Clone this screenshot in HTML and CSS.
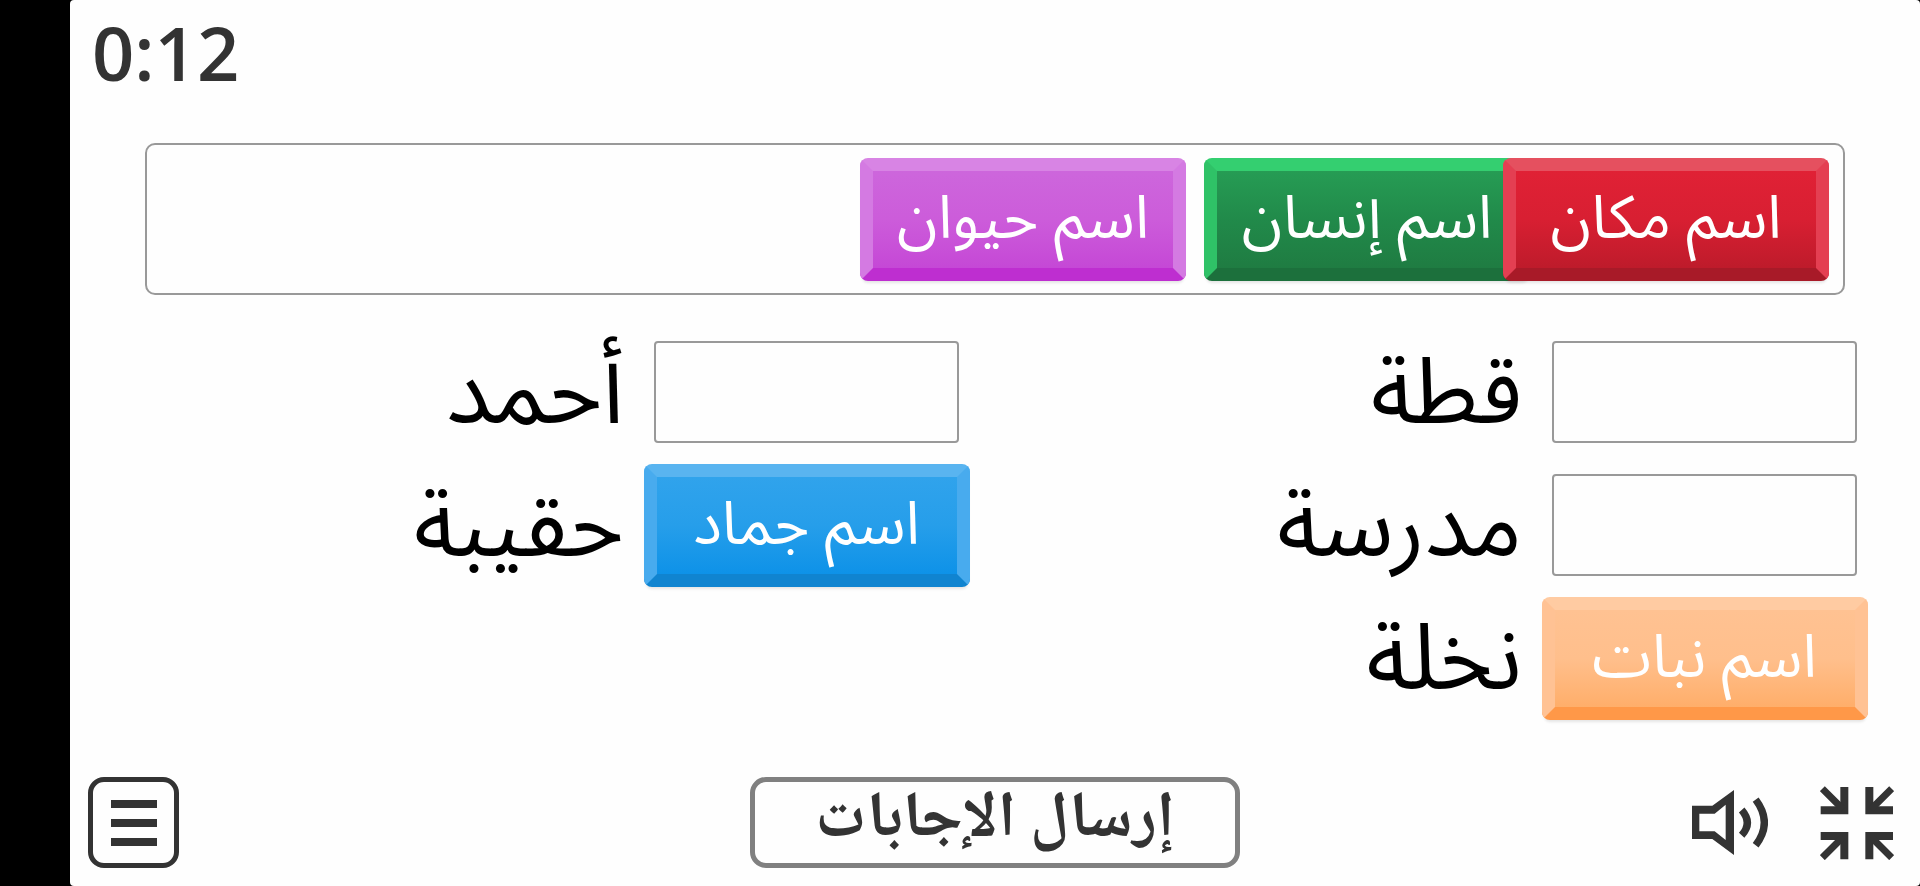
FILE: index.html
```html
<!DOCTYPE html>
<html lang="ar">
<head>
  <meta charset="UTF-8">
  <meta name="viewport" content="width=device-width, initial-scale=1.0">
  <title>اسم مكان</title>
  <link rel="stylesheet" href="styles.css">
</head>
<body>
  <main class="stage">
    <div class="timer">0:12</div>

    <div class="bank">
      <button class="tile purple" dir="rtl">اسم حيوان</button>
      <button class="tile green" dir="rtl">اسم إنسان</button>
      <button class="tile red" dir="rtl">اسم مكان</button>
    </div>

    <div class="questions">
      <div class="question">
        <span class="word" dir="rtl">أحمد</span>
        <div class="slot"></div>
      </div>
      <div class="question">
        <span class="word" dir="rtl">قطة</span>
        <div class="slot"></div>
      </div>
      <div class="question">
        <span class="word" dir="rtl">حقيبة</span>
        <div class="slot filled">
          <button class="tile blue" dir="rtl">اسم جماد</button>
        </div>
      </div>
      <div class="question">
        <span class="word" dir="rtl">مدرسة</span>
        <div class="slot"></div>
      </div>
      <div class="question last">
        <span class="word" dir="rtl">نخلة</span>
        <div class="slot filled">
          <button class="tile orange" dir="rtl">اسم نبات</button>
        </div>
      </div>
    </div>

    <footer class="toolbar">
      <div class="toolbar-left">
        <button class="menu-button" aria-label="القائمة">
          <svg width="46" height="46" viewBox="0 0 46 46" fill="#333">
            <path d="M0 0h46v8H0zM0 19h46v8H0zM0 38h46v8H0z"></path>
          </svg>
        </button>
      </div>
      <button class="submit-button" dir="rtl">إرسال الإجابات</button>
      <div class="toolbar-right">
        <button class="icon-button" aria-label="الصوت">
          <svg width="76" height="65" viewBox="92 88 228 195">
            <path fill="#333" fill-rule="evenodd" d="M92 135H153L218 88V283L153 235H92ZM114 159V212H160L193 238V132L160 159Z"></path>
            <path fill="none" stroke="#333" stroke-width="22" d="M241 148Q275 187 241 224M283 117Q335 186 283 254"></path>
          </svg>
        </button>
        <button class="icon-button" aria-label="إنهاء ملء الشاشة">
          <svg width="74" height="74" viewBox="480 74 222 222" fill="none" stroke="#333">
            <path stroke-width="24" d="M482 147H553V77M699 147H628V77M482 224H553V294M699 224H628V294"></path>
            <path stroke-width="21" d="M487 82L549 144M695 82L633 144M487 289L549 227M695 289L633 227"></path>
          </svg>
        </button>
      </div>
    </footer>
  </main>
</body>
</html>
```
FILE: styles.css
```css
* {
  box-sizing: border-box;
}

body {
  margin: 0;
  padding-left: 70px;
  background-color: #000;
  font-family: "Open Sans", "Noto Sans Arabic", "DejaVu Sans", sans-serif;
}

.stage {
  display: flex;
  flex-direction: column;
  min-height: 100vh;
  padding: 0 18px 18px;
  background-color: #fefefe;
  border-radius: 4px;
}

.timer {
  padding: 13px 0 0 4px;
  height: 143px;
  font-size: 74px;
  line-height: 80px;
  font-weight: 600;
  color: #333;
}

.bank {
  display: flex;
  justify-content: flex-end;
  align-items: center;
  height: 152px;
  margin: 0 57px;
  padding: 0 14px;
  border: 2px solid #999;
  border-radius: 10px;
}

button {
  padding: 0;
  border: none;
  background: transparent;
  font-family: inherit;
  cursor: pointer;
}

.tile {
  flex-shrink: 0;
  width: 326px;
  height: 123px;
  padding-bottom: 8px;
  border-style: solid;
  border-width: 13px;
  border-radius: 8px;
  background-clip: padding-box;
  color: #fff;
  font-size: 60px;
  line-height: 72px;
  white-space: nowrap;
  box-shadow: 0 4px 3px -2px rgba(0, 0, 0, 0.1);
}

.purple {
  margin-right: 18px;
  border-color: #d884e4 #d47ae2 #be2ed0 #d47ae2;
  background-color: #cd62dc;
  background-image: linear-gradient(#cd66dc, #cc5cda 50%, #c548d6);
}

.green {
  border-color: #34cf70 #2fc267 #1c703c #2fc267;
  background-color: #229050;
  background-image: linear-gradient(#269c54, #218a4a 50%, #1f7c42);
}

.red {
  margin-left: -27px;
  border-color: #e5505f #e43f52 #a81a28 #e43f52;
  background-color: #da1f32;
  background-image: linear-gradient(#e02135, #d81f32 50%, #be1b2b);
}

.blue {
  border-color: #59b4f0 #48abee #1084d0 #48abee;
  background-color: #1f9bea;
  background-image: linear-gradient(#30a3ec, #269eea 50%, #0e92e8);
}

.orange {
  border-color: #ffcba2 #ffc294 #ff9848 #ffc294;
  background-color: #ffbd8a;
  background-image: linear-gradient(#ffc292, #ffbf8c 50%, #ffae6a);
}

.questions {
  display: grid;
  grid-template-columns: 1fr 1fr;
  gap: 31px 84px;
  margin: 46px 45px 0 57px;
}

.question {
  display: flex;
  align-items: center;
  justify-content: flex-end;
  gap: 30px;
  height: 102px;
}

.last {
  grid-column: 2;
}

.word {
  padding-bottom: 8px;
  font-size: 92px;
  line-height: 102px;
  color: #000;
}

.slot {
  display: flex;
  align-items: center;
  justify-content: center;
  flex-shrink: 0;
  width: 305px;
  height: 102px;
  border: 2px solid #999;
  border-radius: 4px;
}

.filled {
  border-color: transparent;
}

.toolbar {
  display: grid;
  grid-template-columns: 1fr auto 1fr;
  align-items: center;
  margin-top: auto;
}

.menu-button {
  display: flex;
  align-items: center;
  justify-content: center;
  width: 91px;
  height: 91px;
  border: 5px solid #333;
  border-radius: 16px;
}

.submit-button {
  width: 490px;
  height: 91px;
  border: 5px solid #808080;
  border-radius: 16px;
  color: #333;
  font-family: "Noto Naskh Arabic", "DejaVu Sans", sans-serif;
  font-size: 64px;
  line-height: 76px;
  font-weight: 700;
}

.toolbar-right {
  display: flex;
  align-items: center;
  justify-content: flex-end;
  gap: 52px;
  padding-right: 8px;
}

.icon-button {
  display: flex;
}
```
